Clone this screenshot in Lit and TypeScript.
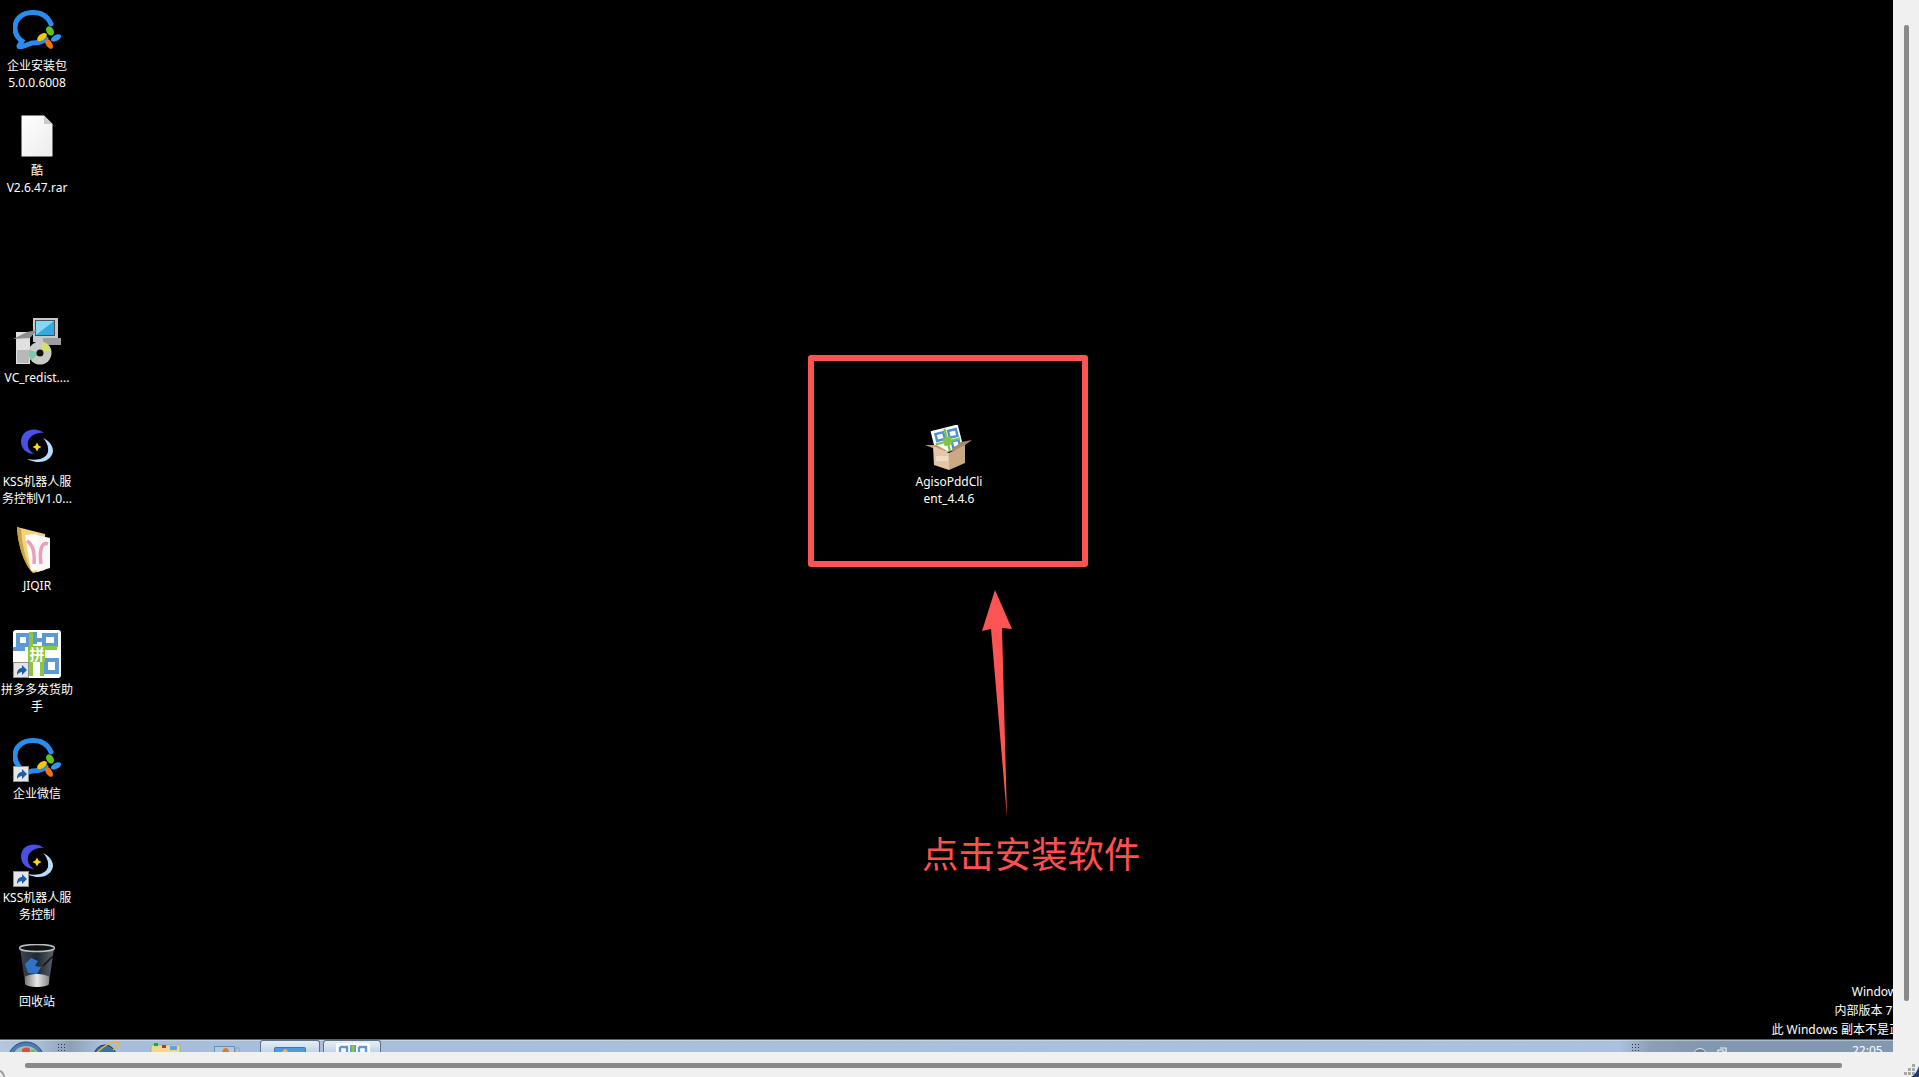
import { LitElement, html, svg, css } from "lit";
import { customElement } from "lit/decorators.js";

const shortcut = (x: number, y: number) => svg`
  <g transform="translate(${x} ${y})">
    <rect x="0.500" y="0.500" width="15" height="15" fill="#e4e6e8" stroke="#8d9093"/>
    <path d="M4 13 C4 8 6 6 9 6 L9 3 L14 8 L9 13 L9 10 C7 10 5.500 11 4 13Z" fill="#1d5fa8"/>
  </g>`;

const wecom = (badge = false) => html`<svg class="ic" width="48" height="44" viewBox="0 0 48 44">
  <path d="M33 29 C29 32 25 33 19 33 L11 36 C8 37 6 37 6 36 L9 31 C3 27 2 22 2 18 C2 8 10 2.500 20 2.500 C29 2.500 35 7 38 14" fill="none" stroke="#2a8bf0" stroke-width="5" stroke-linecap="round"/>
  <ellipse cx="37" cy="21" rx="3.500" ry="5" transform="rotate(-30 37 21)" fill="#5fc31b"/>
  <ellipse cx="29" cy="27" rx="3" ry="5.500" transform="rotate(55 29 27)" fill="#f7c614"/>
  <ellipse cx="36" cy="34" rx="3" ry="5.500" transform="rotate(-35 36 34)" fill="#f0720d"/>
  <ellipse cx="43" cy="28" rx="3" ry="5.500" transform="rotate(60 43 28)" fill="#3196ee"/>
  ${badge ? shortcut(0, 28) : ""}
</svg>`;

const kss = (badge = false) => html`<svg class="ic" width="48" height="48" viewBox="0 0 48 48">
  <path d="M31 8 C24 2 9 3 8 16 C8 24 14 29 21 29 C16 26 14 21 15 17 C16 11 24 7 31 8Z" fill="#4a50e8"/>
  <path d="M30 13 C35 15 40 20 40 26 C39 35 28 41 14 34 C24 36 33 34 35 27 C36 21 33 16 30 13Z" fill="#b9dcff"/>
  <path d="M24 17.500 L25.500 20.500 L28.500 22 L25.500 23.500 L24 26.500 L22.500 23.500 L19.500 22 L22.500 20.500Z" fill="#fdd816"/>
  ${badge ? shortcut(0, 31) : ""}
</svg>`;

const pddPaths = svg`
  <rect x="0" y="0" width="48" height="48" rx="3" fill="#fff"/>
  <g fill="none" stroke="#5c9ad3" stroke-width="4">
    <path d="M5 5 H15 V15 H5Z M31 5 H43 V15 H31Z M33 30 H44 V42 H33Z"/>
    <path d="M0 19 H12 M22 2 V14 M20 10 H30"/>
  </g>
  <g stroke="#8cc63f" stroke-width="4" fill="none"><path d="M18 2 V46 M30 18 H44 M29 18 V46"/></g>
  <path d="M15 16 H32 V32 H15Z" fill="#8cc63f"/>
  <text x="24" y="30" font-size="15" font-weight="700" fill="#fff" text-anchor="middle" font-family="Noto Sans CJK SC">拼</text>`;

const pdd = () => html`<svg class="ic" width="48" height="48" viewBox="0 0 48 48">${pddPaths}${shortcut(0, 32)}</svg>`;

const file = () => html`<svg class="ic" width="32" height="42" viewBox="0 0 32 42">
  <defs><linearGradient id="f" x1="0" x2="1" y1="0" y2="1"><stop offset="0" stop-color="#fff"/><stop offset="1" stop-color="#ececec"/></linearGradient></defs>
  <path d="M0.500 0.500 H23 L31.500 9 V41.500 H0.500Z" fill="url(#f)"/>
  <path d="M23 0.500 V9 H31.500Z" fill="#c9c9c9"/>
</svg>`;

const installer = () => html`<svg class="ic" width="48" height="48" viewBox="0 0 48 48">
  <rect x="20" y="0" width="25" height="24" fill="#c8c8c8"/>
  <rect x="22" y="2" width="20" height="16" fill="#4a4f55"/>
  <rect x="23" y="3" width="18" height="14" fill="#33a9df"/>
  <path d="M23 3 H41 L23 17Z" fill="#7fdcf4"/>
  <rect x="30" y="20" width="18" height="7" fill="#9c9c9c"/>
  <rect x="3" y="14" width="14" height="32" fill="#e0e0e0"/>
  <path d="M0 21 L14 14 L24 12 L17 20Z" fill="#8e8e8e"/>
  <rect x="4" y="32" width="12" height="13" fill="#b8b8b8"/>
  <circle cx="27" cy="35" r="11.500" fill="#c8ccc8"/>
  <path d="M27 35 L30 24 A11.500 11.500 0 0 1 38 32Z" fill="#d5e06a"/>
  <path d="M27 35 L18 42 A11.500 11.500 0 0 1 16 32Z" fill="#7fc7a8"/>
  <circle cx="27" cy="35" r="3.500" fill="#111"/>
</svg>`;

const folder = () => html`<svg class="ic" width="42" height="50" viewBox="0 0 42 50">
  <path d="M1 1 L29 8 V44 L17 47 C8 38 2 20 1 1Z" fill="#f2d27a"/>
  <path d="M1 1 L5 3 C6 20 10 36 17 47 C8 38 2 20 1 1Z" fill="#c9a348"/>
  <path d="M9 9 L21 8 V44 L15 45Z" fill="#fdfdfd"/>
  <path d="M21 9 L34 12 V42 L21 46Z" fill="#f8f8f8"/>
  <path d="M11 15 C16 18 19 26 18 38" fill="none" stroke="#ec9dba" stroke-width="3.500"/>
  <path d="M32 18 C26 15 23 24 25 38" fill="none" stroke="#ec9dba" stroke-width="3.500"/>
</svg>`;

const bin = () => html`<svg class="ic" width="36" height="44" viewBox="0 0 36 44">
  <defs>
    <linearGradient id="b" x1="0" x2="1" y1="0" y2="0"><stop offset="0" stop-color="#3c4650"/><stop offset="0.5" stop-color="#202830"/><stop offset="1" stop-color="#5a636c"/></linearGradient>
    <linearGradient id="c" x1="0" x2="1" y1="0" y2="0"><stop offset="0" stop-color="#777"/><stop offset="0.5" stop-color="#e8e8e8"/><stop offset="1" stop-color="#888"/></linearGradient>
  </defs>
  <path d="M1 4 L6 39 C8 44 28 44 30 39 L35 4Z" fill="url(#b)"/>
  <ellipse cx="18" cy="4" rx="17.500" ry="3.500" fill="#111" stroke="#b9bdc1" stroke-width="1.500"/>
  <path d="M6 33 C10 29 26 29 30 33 L30 40 C28 44 8 44 6 40Z" fill="url(#c)"/>
  <path d="M6 20 L12 14 L19 17 L16 22 L22 23 L18 30 L9 29 Z" fill="#2f73c8"/>
  <path d="M24 22 L34 12" stroke="#111" stroke-width="1.500"/>
</svg>`;

const box = () => html`<svg class="ic" width="48" height="46" viewBox="0 0 48 46">
  <g transform="rotate(-14 24 14)">
    <rect x="8" y="2" width="28" height="24" rx="1" fill="#fff"/>
    <path d="M12 6 H20 V13 H12Z M25 6 H33 V13 H25Z M26 17 H33 V24 H26Z" fill="none" stroke="#4a90d6" stroke-width="2.400"/>
    <path d="M22 3 V26 M10 16 H35" stroke="#82c341" stroke-width="2.200"/>
    <rect x="18" y="12" width="8" height="8" fill="#82c341"/>
  </g>
  <path d="M0 20 L10 24 L24 27 L12 20Z" fill="#bd9c7a"/>
  <path d="M47 15 L36 23 L24 27 L36 17Z" fill="#a9896a"/>
  <path d="M8 21 L24 28 V45 L9 40Z" fill="#e5c7a5"/>
  <path d="M24 28 L40 20 V38 L24 45Z" fill="#cba985"/>
  <path d="M11 31 H23 V36 H11Z" fill="#f3e6d6" opacity="0.7"/>
</svg>`;

interface Item { t: number; lines: string[]; icon: unknown; gap: number; }

const items: Item[] = [
  { t: 10, icon: wecom(), gap: 3, lines: ["企业安装包", "5.0.0.6008"] },
  { t: 115, icon: file(), gap: 5, lines: ["酷", "V2.6.47.rar"] },
  { t: 318, icon: installer(), gap: 3, lines: ["VC_redist...."] },
  { t: 425, icon: kss(), gap: 0, lines: ["KSS机器人服", "务控制V1.0..."] },
  { t: 526, icon: folder(), gap: 1, lines: ["JIQIR"] },
  { t: 630, icon: pdd(), gap: 3, lines: ["拼多多发货助", "手"] },
  { t: 738, icon: wecom(true), gap: 3, lines: ["企业微信"] },
  { t: 840, icon: kss(true), gap: 1, lines: ["KSS机器人服", "务控制"] },
  { t: 944, icon: bin(), gap: 5, lines: ["回收站"] },
];

@customElement("app-root")
export class AppRoot extends LitElement {
  static styles = css`
    :host {
      display: grid;
      grid-template-columns: 1fr 26px;
      grid-template-rows: 1fr 25px;
      width: 100%;
      height: 1077px;
      background: #f0f0f0;
      overflow: hidden;
      font-family: "Noto Sans", "Noto Sans CJK SC", sans-serif;
      font-size: 12px;
    }
    .screen { display: flex; flex-direction: column; min-width: 0; overflow: hidden; }
    .desktop { flex: 1; position: relative; background: #000; overflow: hidden; }
    .item {
      position: absolute;
      width: 74px;
      display: flex;
      flex-direction: column;
      align-items: center;
      color: #fff;
      text-align: center;
    }
    .label { line-height: 17px; white-space: nowrap; }
    .ic { display: block; flex: none; }
    .frame {
      position: absolute;
      left: 808px;
      top: 355px;
      width: 280px;
      height: 212px;
      box-sizing: border-box;
      border: 6.500px solid #ff5454;
      border-radius: 3px;
    }
    .arrow { position: absolute; left: 975px; top: 585px; }
    .note {
      position: absolute;
      left: 922px;
      top: 826px;
      color: #ff5050;
      font-size: 36.400px;
      line-height: 52px;
      white-space: nowrap;
      font-family: "Noto Sans CJK SC", sans-serif;
      font-weight: 400;
    }
    .mark {
      position: absolute;
      right: -20px;
      top: 982px;
      color: #fff;
      text-align: right;
      line-height: 19px;
      white-space: nowrap;
    }
    .taskbar {
      height: 13px;
      flex: none;
      box-sizing: border-box;
      border-top: 1px solid #5a6470;
      box-shadow: inset 0 1px 0 rgba(255, 255, 255, 0.35);
      position: relative;
      overflow: hidden;
      background: linear-gradient(90deg, #b3c8e0 0, #a9bed6 40px, #8c9fb5 70px, #a6bedb 100px, #a9c1de 1620px, #8c9fb6 1650px, #8298b0 1700px, #8298b0 100%);
    }
    .orb { position: absolute; left: 7px; top: 1px; }
    .grip {
      position: absolute;
      top: 3px;
      width: 8px;
      height: 8px;
      background-image: radial-gradient(circle, #2c3a4a 0.900px, transparent 1px);
      background-size: 3px 3px;
    }
    .tb { position: absolute; }
    .tab {
      position: absolute;
      top: 0;
      height: 13px;
      box-sizing: border-box;
      border: 1px solid #5d7288;
      border-bottom: 0;
      border-radius: 3px 3px 0 0;
      background: linear-gradient(180deg, #e6eef7, #c0d2e6);
    }
    .clock { position: absolute; left: 1852px; top: 4px; color: #fff; font-size: 12px; line-height: 14px; }
    .vbar { grid-row: 1; grid-column: 2; background: #f0f0f0; display: flex; padding: 25px 0 0 11px; box-sizing: border-box; }
    .vthumb { width: 5px; height: 976px; background: #8a8a8a; border-radius: 2px; }
    .hbar { grid-row: 2; grid-column: 1; background: #f0f0f0; padding: 11px 0 0 25px; box-sizing: border-box; position: relative; }
    .hthumb { width: 1817px; height: 5px; background: #8a8a8a; border-radius: 2px; }
    .curve { position: absolute; left: 0; bottom: 0; }
    .corner { grid-row: 2; grid-column: 2; position: relative; background: #f0f0f0; overflow: hidden; }
    .corner svg { position: absolute; right: 0; bottom: 0; }
  `;

  render() {
    return html`
      <div class="screen">
        <div class="desktop">
          ${items.map(
            (i) => html`<div class="item" style="left:0;top:${i.t}px">
              ${i.icon}
              <div class="label" style="margin-top:${i.gap}px">${i.lines.map((l) => html`<div>${l}</div>`)}</div>
            </div>`
          )}
          <div class="item" style="left:912px;top:425px">
            ${box()}
            <div class="label" style="margin-top:2px"><div>AgisoPddCli</div><div>ent_4.4.6</div></div>
          </div>
          <div class="frame"></div>
          <svg class="arrow" width="50" height="240" viewBox="975 585 50 240">
            <path d="M995 590 L1012 629 L1002 628 L1007 817 L991 629 L982 631Z" fill="#ff5454"/>
          </svg>
          <div class="note">点击安装软件</div>
          <div class="mark"><div>Windows 7</div><div>内部版本 7601</div><div>此 Windows 副本不是正版</div></div>
        </div>
        <div class="taskbar">
          <svg class="orb" width="38" height="12" viewBox="0 0 38 12">
            <circle cx="19" cy="19" r="18" fill="#4c7fb0" stroke="#23507c"/>
            <circle cx="19" cy="19" r="14" fill="#9fb8cc"/>
            <path d="M15 8 C18 6 21 6 23 8 L23 12 L15 12Z" fill="#d8542a"/>
            <path d="M24 9 H28 V12 H24Z" fill="#7ab648"/>
          </svg>
          <div class="grip" style="left:57px"></div>
          <svg class="tb" style="left:93px;top:1px" width="28" height="12" viewBox="0 0 28 12">
            <circle cx="12" cy="15" r="11" fill="#3e6fa8" stroke="#16385f"/>
            <path d="M2 14 C10 4 20 0 26 1 C27 3 24 6 20 9" fill="none" stroke="#eeb528" stroke-width="1.500"/>
          </svg>
          <svg class="tb" style="left:150px;top:3px" width="32" height="10" viewBox="0 0 32 10">
            <path d="M3 2 H30 V10 H1 V3Z" fill="#f2d88c" stroke="#b39b58" stroke-width="0.600"/>
            <rect x="4" y="0" width="4" height="3" fill="#12b03a"/>
            <rect x="12" y="2" width="4" height="3" fill="#c9301f"/>
            <rect x="20" y="3" width="7" height="4" fill="#5aa7e0"/>
          </svg>
          <svg class="tb" style="left:214px;top:6px" width="26" height="7" viewBox="0 0 26 7">
            <rect x="0.500" y="0.500" width="20" height="8" fill="#a9cde8" stroke="#6f8fac"/>
            <rect x="22" y="2" width="3" height="6" fill="#a9cde8" stroke="#6f8fac" stroke-width="0.600"/>
            <path d="M8 7 C8 4 10 2 12 2 C14 2 15 4 15 7Z" fill="#e87a1e"/>
          </svg>
          <div class="tab" style="left:260px;width:60px">
            <svg class="tb" style="left:13px;top:6px" width="32" height="6" viewBox="0 0 32 6">
              <rect x="0.500" y="0.500" width="31" height="8" rx="1" fill="#4d9ade" stroke="#3a78b5"/>
              <path d="M8 6 C8 4 10 2 11 2 C13 2 14 4 14 6Z" fill="#eeb640"/>
            </svg>
          </div>
          <div class="tab" style="left:323px;width:58px">
            <svg class="tb" style="left:12px;top:2px" width="34" height="10" viewBox="0 0 34 10">
              <rect width="34" height="14" rx="2" fill="#fff"/>
              <path d="M4 4 H11 V10 M4 4 V10 M23 4 H30 V10 M23 4 V10" fill="none" stroke="#5c9ad3" stroke-width="2.400"/>
              <rect x="14" y="2" width="6" height="8" fill="#5c9ad3"/>
              <rect x="15.500" y="2" width="3" height="8" fill="#8cc63f"/>
            </svg>
          </div>
          <div class="grip" style="left:1631px"></div>
          <svg class="tb" style="left:1692px;top:8px" width="16" height="5" viewBox="0 0 16 5">
            <circle cx="8" cy="7" r="6.500" fill="#6e7f90" stroke="#dfe6ee"/>
          </svg>
          <svg class="tb" style="left:1717px;top:7px" width="10" height="6" viewBox="0 0 10 6">
            <path d="M3 1 H9 V5 H7 M1 3 H6 V8 H1Z" fill="none" stroke="#eef2f6" stroke-width="1.200"/>
          </svg>
          <div class="clock">22:05</div>
        </div>
      </div>
      <div class="vbar"><div class="vthumb"></div></div>
      <div class="hbar">
        <div class="hthumb"></div>
        <svg class="curve" width="10" height="8" viewBox="0 0 10 8">
          <path d="M0 1 C3 2 5 5 5 8 H3 C3 6 2 4 0 3Z" fill="#9a9ca0"/>
        </svg>
      </div>
      <div class="corner">
        <svg width="26" height="14" viewBox="0 0 26 14">
          <g fill="#a8a8a8"><rect x="19" y="1" width="3" height="3"/><rect x="15" y="5" width="3" height="3"/><rect x="19" y="5" width="3" height="3"/><rect x="11" y="9" width="3" height="3"/><rect x="15" y="9" width="3" height="3"/><rect x="19" y="9" width="3" height="3"/></g>
          <path d="M26 3 V14 H18 C22 12 24 8 26 3Z" fill="#1f3f72"/>
        </svg>
      </div>
    `;
  }
}
